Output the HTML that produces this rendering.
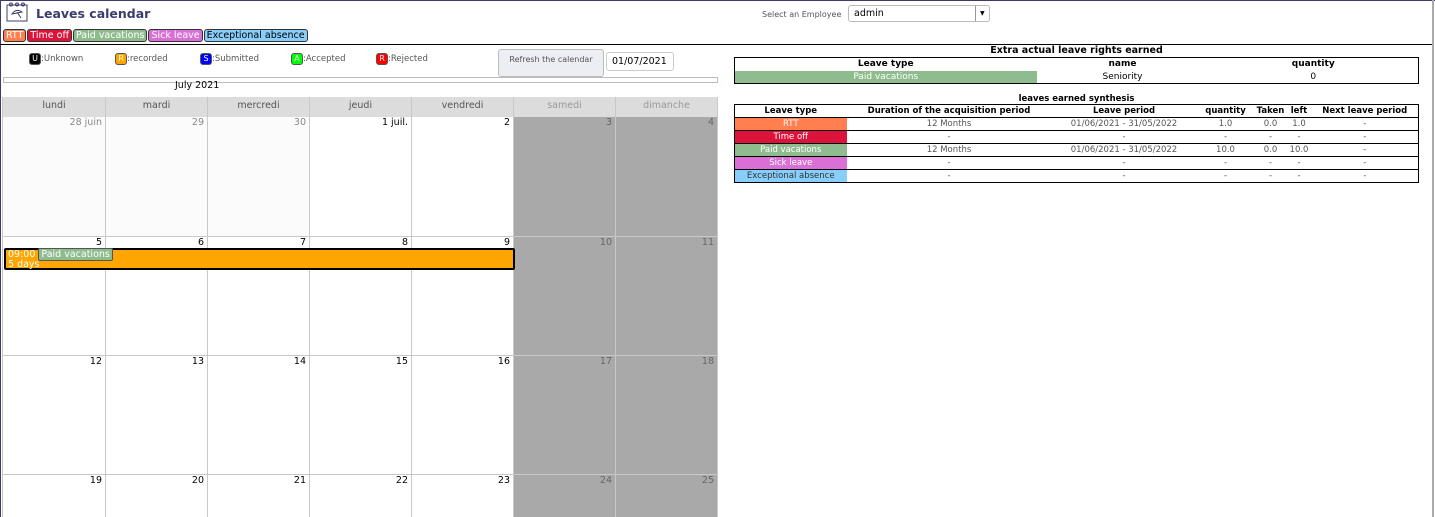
<!DOCTYPE html>
<html style="width:1435px;height:517px;overflow:hidden"><head><meta charset="utf-8"><style>
*{box-sizing:border-box;margin:0;padding:0}
body{width:1435px;height:517px;overflow:hidden;background:#fff;font-family:"DejaVu Sans","Liberation Sans",sans-serif;font-size:9px;color:#000;position:relative}
.a{position:absolute}
.tags{position:absolute;left:3px;top:29px;display:flex;gap:1px}
.tag{height:13px;border:1px solid #333;border-radius:3px;color:#fff;font-size:9.5px;line-height:11px;padding:0 2px;white-space:nowrap}
.st{position:absolute;top:53px;font-size:8.5px;color:#555;line-height:12px}
.st b{display:inline-block;width:12px;height:12px;border:1px solid #555;border-radius:3px;color:#fff;text-align:center;font-size:8px;line-height:10px;font-weight:normal}
.hd{position:absolute;top:97px;height:20px;background:#dcdcdc;border-right:1px solid #c8c8c8;color:#555;text-align:center;line-height:18px;font-size:9.5px}
.c{position:absolute;border-right:1px solid #c8c8c8;border-bottom:1px solid #c8c8c8;text-align:right;padding:1px 3px;font-size:9.5px;line-height:10px}
table{border-collapse:collapse;font-size:8.5px;position:absolute}
td,th{height:13px;padding:0;text-align:center;line-height:12px}
th{font-weight:bold}
.t2 td{color:#555}
</style></head><body>
<div class="a" style="left:0;top:0;width:1435px;height:1px;background:#3c3c6c"></div>
<div class="a" style="left:0;top:0;width:1px;height:517px;background:#3c3c6c"></div>
<div class="a" style="left:1432px;top:0;width:2px;height:517px;background:#aaa"></div>
<svg class="a" style="left:6px;top:2px" width="22" height="20" viewBox="0 0 22 20"><rect x="1" y="3" width="20" height="16" fill="#fff" stroke="#3c3c6c"/><circle cx="5" cy="2.5" r="1.5" fill="none" stroke="#3c3c6c"/><circle cx="11" cy="2.5" r="1.5" fill="none" stroke="#3c3c6c"/><circle cx="17" cy="2.5" r="1.5" fill="none" stroke="#3c3c6c"/><path d="M6 12 Q10 6 16 10 Z M11 10 L15 16" fill="none" stroke="#3c3c6c"/></svg>
<div class="a" style="left:36px;top:6px;font-size:12.5px;font-weight:bold;color:#3c3c6c">Leaves calendar</div>
<div class="a" style="left:762px;top:10px;font-size:8px;color:#555">Select an Employee</div>
<div class="a" style="left:848px;top:5px;width:142px;height:17px;border:1px solid #bbb;border-radius:3px;font-size:9.5px;padding:2px 5px">admin<span style="position:absolute;left:126px;top:0;height:15px;border-left:1px solid #999;padding-left:4px;font-size:6px;line-height:15px">▼</span></div>
<div class="tags">
<span class="tag" style="background:#ff7f50">RTT</span>
<span class="tag" style="background:#dc143c">Time off</span>
<span class="tag" style="background:#8fbc8f">Paid vacations</span>
<span class="tag" style="background:#da70d6">Sick leave</span>
<span class="tag" style="background:#87cefa;color:#000">Exceptional absence</span>
</div>
<div class="a" style="left:0;top:44px;width:1432px;height:1px;background:#000"></div>
<div class="st" style="left:29px"><b style="background:#000">U</b>:Unknown</div>
<div class="st" style="left:115px"><b style="background:#ffa500">R</b>:recorded</div>
<div class="st" style="left:200px"><b style="background:#00f">S</b>:Submitted</div>
<div class="st" style="left:291px"><b style="background:#0f0">A</b>:Accepted</div>
<div class="st" style="left:376px"><b style="background:#f00">R</b>:Rejected</div>
<div class="a" style="left:498px;top:49px;width:106px;height:28px;background:#ededf4;border:1px solid #bbb;border-radius:3px;font-size:8px;color:#555;text-align:center;padding-top:5px">Refresh the calendar</div>
<div class="a" style="left:606px;top:52px;width:68px;height:19px;border:1px solid #ccc;border-radius:3px;font-size:9.5px;padding:3px 5px">01/07/2021</div>
<div class="a" style="left:3px;top:77px;width:715px;height:6px;border:1px solid #bbb"></div>
<div class="a" style="left:175px;top:80px;font-size:9.5px">July 2021</div>
<div class="a" style="left:2px;top:97px;width:1px;height:420px;background:#c8c8c8"></div>
<div id="cal" class="a" style="left:0;top:0;width:1435px;height:517px;overflow:hidden"></div>
<script>
var xs=[3,106,208,310,412,514,616,718],ys=[117,237,356,475,517];
var n=["lundi","mardi","mercredi","jeudi","vendredi","samedi","dimanche"];
var d=[["28 juin","29","30","1 juil.","2","3","4"],["5","6","7","8","9","10","11"],["12","13","14","15","16","17","18"],["19","20","21","22","23","24","25"]];
var h="";
for(var i=0;i<7;i++){h+='<div class="hd" style="left:'+xs[i]+'px;width:'+(xs[i+1]-xs[i])+'px;'+(i>4?'color:#999':'')+'">'+n[i]+'</div>';}
for(var r=0;r<4;r++)for(var i=0;i<7;i++){var bg=i>4?'#a9a9a9':(r==0&&i<3?'#fbfbfb':'#fff');var col=i>4?'#666':(r==0&&i<3?'#888':'#000');
h+='<div class="c" style="left:'+xs[i]+'px;top:'+ys[r]+'px;width:'+(xs[i+1]-xs[i])+'px;height:'+(ys[r+1]-ys[r])+'px;background:'+bg+';color:'+col+(r==3?';border-bottom:none':'')+'">'+d[r][i]+'</div>';}
h+='<div class="a" style="left:4px;top:248px;width:511px;height:22px;background:#ffa500;border:2px solid #000;border-radius:2px;color:#fff;font-size:9.5px;line-height:10px;padding:0 2px">09:00 <span style="background:#8fbc8f;border:1px solid #555;border-radius:2px;padding:0 2px">Paid vacations</span><br>5 days</div>';
document.getElementById('cal').innerHTML=h;
</script>
<div class="a" style="left:734px;top:45px;width:685px;text-align:center;font-weight:bold;font-size:9.5px">Extra actual leave rights earned</div>
<table style="left:734px;top:57px;width:685px;border:1px solid #000;font-size:9px">
<tr><th style="width:302px">Leave type</th><th style="width:172px">name</th><th>quantity</th></tr>
<tr><td style="background:#8fbc8f;color:#fff">Paid vacations</td><td>Seniority</td><td>0</td></tr></table>
<div class="a" style="left:734px;top:94px;width:685px;text-align:center;font-weight:bold;font-size:8.5px">leaves earned synthesis</div>
<table class="t2" style="left:734px;top:104px;width:685px;border:1px solid #000">
<tr><th style="width:112px">Leave type</th><th style="width:205px">Duration of the acquisition period</th><th style="width:145px">Leave period</th><th style="width:58px">quantity</th><th style="width:32px">Taken</th><th style="width:25px">left</th><th>Next leave period</th></tr>
<tr style="border-top:1px solid #000"><td style="background:#ff7f50;color:#fff">RTT</td><td>12 Months</td><td>01/06/2021 - 31/05/2022</td><td>1.0</td><td>0.0</td><td>1.0</td><td>-</td></tr>
<tr style="border-top:1px solid #000"><td style="background:#dc143c;color:#fff">Time off</td><td>-</td><td>-</td><td>-</td><td>-</td><td>-</td><td>-</td></tr>
<tr style="border-top:1px solid #000"><td style="background:#8fbc8f;color:#fff">Paid vacations</td><td>12 Months</td><td>01/06/2021 - 31/05/2022</td><td>10.0</td><td>0.0</td><td>10.0</td><td>-</td></tr>
<tr style="border-top:1px solid #000"><td style="background:#da70d6;color:#fff">Sick leave</td><td>-</td><td>-</td><td>-</td><td>-</td><td>-</td><td>-</td></tr>
<tr style="border-top:1px solid #000"><td style="background:#87cefa;color:#333">Exceptional absence</td><td>-</td><td>-</td><td>-</td><td>-</td><td>-</td><td>-</td></tr>
</table>
</body></html>
